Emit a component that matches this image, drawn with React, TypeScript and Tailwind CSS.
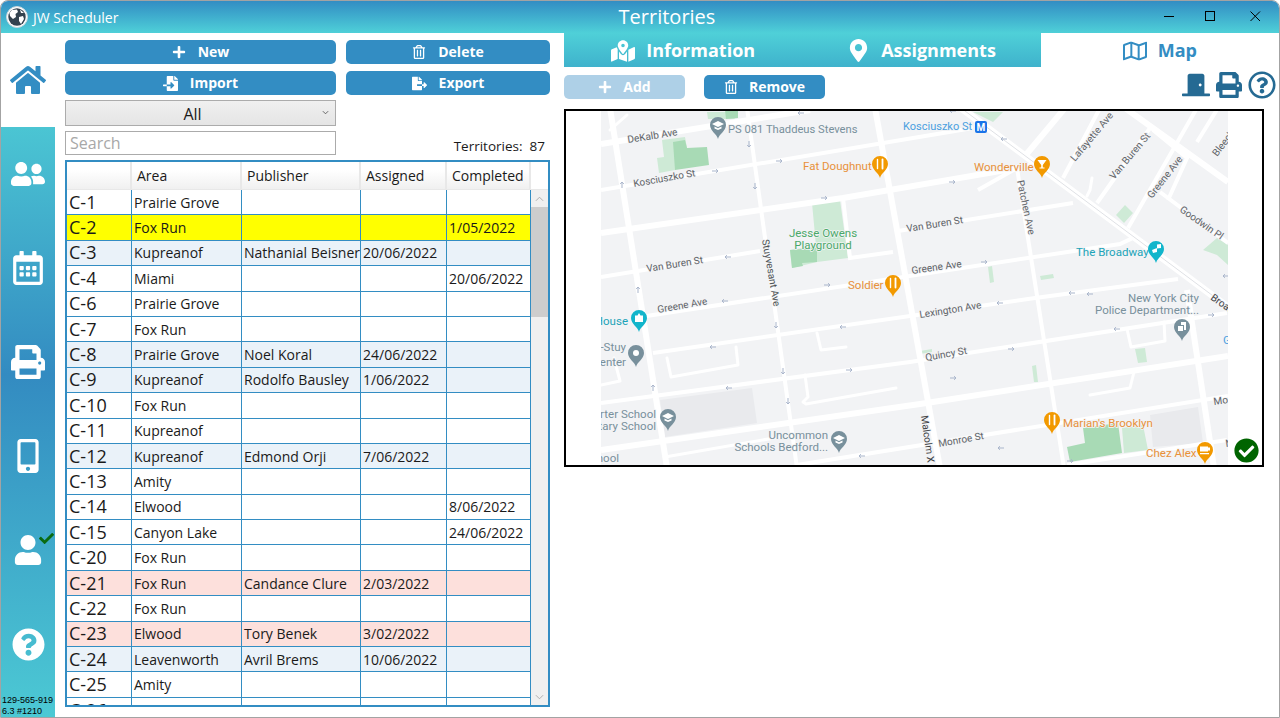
import React from "react";
import {
  FaHome, FaUserFriends, FaRegCalendarAlt, FaPrint, FaMobileAlt, FaUser, FaQuestionCircle, FaRegQuestionCircle,
  FaDoorClosed, FaPlus, FaRegTrashAlt, FaFileImport, FaFileExport, FaMapMarkedAlt, FaMapMarkerAlt, FaRegMap, FaCheckCircle, FaCheck,
} from "react-icons/fa";

type Row = [string, string, string, string, string, string?];
const rows: Row[] = [
  ["C-1", "Prairie Grove", "", "", ""],
  ["C-2", "Fox Run", "", "", "1/05/2022", "y"],
  ["C-3", "Kupreanof", "Nathanial Beisner", "20/06/2022", "", "b"],
  ["C-4", "Miami", "", "", "20/06/2022"],
  ["C-6", "Prairie Grove", "", "", ""],
  ["C-7", "Fox Run", "", "", ""],
  ["C-8", "Prairie Grove", "Noel Koral", "24/06/2022", "", "b"],
  ["C-9", "Kupreanof", "Rodolfo Bausley", "1/06/2022", "", "b"],
  ["C-10", "Fox Run", "", "", ""],
  ["C-11", "Kupreanof", "", "", ""],
  ["C-12", "Kupreanof", "Edmond Orji", "7/06/2022", "", "b"],
  ["C-13", "Amity", "", "", ""],
  ["C-14", "Elwood", "", "", "8/06/2022"],
  ["C-15", "Canyon Lake", "", "", "24/06/2022"],
  ["C-20", "Fox Run", "", "", ""],
  ["C-21", "Fox Run", "Candance Clure", "2/03/2022", "", "p"],
  ["C-22", "Fox Run", "", "", ""],
  ["C-23", "Elwood", "Tory Benek", "3/02/2022", "", "p"],
  ["C-24", "Leavenworth", "Avril Brems", "10/06/2022", "", "b"],
  ["C-25", "Amity", "", "", ""],
  ["C-26", "Kupreanof", "", "", ""],
];

function ActionButton({ icon, label, className, gap = "gap-3" }: { icon: React.ReactNode; label: string; className: string; gap?: string }) {
  return (
    <div className={`h-6 rounded-[5px] flex items-center justify-center text-white font-bold text-[14px] ${gap} ${className}`}>
      {icon}
      <span className="-mt-[2px]">{label}</span>
    </div>
  );
}

function Tab({ icon, label, active }: { icon: React.ReactNode; label: string; active?: boolean }) {
  return (
    <div className={`flex-1 h-full flex items-center justify-center gap-[11px] text-[18px] font-bold pt-[1px] ${active ? "bg-white text-[#338dc3]" : "text-white"}`}>
      {icon}
      <span>{label}</span>
    </div>
  );
}

function Pin({ x, y, color, glyph }: { x: number; y: number; color: string; glyph: string }) {
  const cy = y - 14;
  return (
    <g>
      <path d={`M${x} ${y} C${x - 1} ${y - 5} ${x - 8} ${y - 8} ${x - 8} ${cy} A8 8 0 1 1 ${x + 8} ${cy} C${x + 8} ${y - 8} ${x + 1} ${y - 5} ${x} ${y} Z`} fill={color} />
      {glyph === "fork" && (
        <g stroke="#fff" strokeWidth="1.4" strokeLinecap="round" fill="none">
          <path d={`M${x - 2.5} ${cy - 4.5} V${cy - 1} M${x - 2.5} ${cy - 1} V${cy + 4.5}`} />
          <path d={`M${x + 2.5} ${cy - 4.5} V${cy + 4.5}`} strokeWidth="1.8" />
        </g>
      )}
      {glyph === "cap" && (
        <path d={`M${x} ${cy - 4} L${x + 6} ${cy - 1} L${x} ${cy + 2} L${x - 6} ${cy - 1} Z M${x - 3.5} ${cy + 1.5} L${x} ${cy + 3.2} L${x + 3.5} ${cy + 1.5} V${cy + 3.5} L${x} ${cy + 5} L${x - 3.5} ${cy + 3.5} Z`} fill="#fff" />
      )}
      {glyph === "dot" && <circle cx={x} cy={cy} r="3" fill="#fff" />}
      {glyph === "glass" && <path d={`M${x - 4.5} ${cy - 4} H${x + 4.5} L${x + 0.8} ${cy + 1} V${cy + 3.5} H${x + 2.5} V${cy + 4.6} H${x - 2.5} V${cy + 3.5} H${x - 0.8} V${cy + 1} Z`} fill="#fff" />}
      {glyph === "music" && <path d={`M${x - 4} ${cy + 1} L${x + 1} ${cy - 1} V${cy + 3} L${x - 3} ${cy + 4} Z M${x + 1} ${cy - 4.5} L${x + 5} ${cy - 5} V${cy - 1} L${x + 1} ${cy - 0.5} Z`} fill="#fff" />}
      {glyph === "museum" && <path d={`M${x} ${cy - 5} L${x + 1.5} ${cy - 2.5} H${x + 4} V${cy + 4} H${x - 4} V${cy - 2.5} H${x - 1.5} Z`} fill="#fff" />}
      {glyph === "police" && <path d={`M${x - 4} ${cy - 1} H${x + 1} V${cy + 4} H${x - 4} Z M${x - 1} ${cy - 5} H${x + 4} V${cy + 3} H${x + 2} V${cy - 2} H${x - 1} Z`} fill="#fff" />}
      {glyph === "cup" && <path d={`M${x - 5} ${cy - 3.5} H${x + 3} V${cy - 2.5} H${x + 5} V${cy + 0.5} H${x + 3} V${cy + 1.5} H${x - 5} Z M${x - 5} ${cy + 3} H${x + 4} V${cy + 4.2} H${x - 5} Z`} fill="#fff" />}
    </g>
  );
}

function Arrow({ x, y, a }: { x: number; y: number; a: number }) {
  return (
    <g transform={`translate(${x} ${y}) rotate(${a})`} stroke="#a9b5cb" fill="none" strokeWidth="1">
      <path d="M-3 0 H3 M1 -1.8 L3 0 L1 1.8" />
    </g>
  );
}

function Label({ x, y, t, c = "#5f6368", r = 0, s = 10, a = "start" }: { x: number; y: number; t: string; c?: string; r?: number; s?: number; a?: "start" | "end" | "middle" }) {
  return (
    <text x={x} y={y} transform={r ? `rotate(${r} ${x} ${y})` : undefined} fill={c} fontSize={s} textAnchor={a} stroke="#f2f3f5" strokeWidth="1.5" paintOrder="stroke" fontFamily="Roboto, sans-serif">
      {t}
    </text>
  );
}

function MapArt() {
  const slate = "#78909c";
  const orange = "#e8913a";
  const teal = "#1ba3b8";
  const green = "#4ba96a";
  const wide: string[] = [
    "M601 144 L810 110",
    "M601 233 L843 198 L1030 166",
    "M601 450 L920 404 L1228 356",
    "M610 108 L667 468",
    "M875 108 L940 468",
    "M1025 156 L1065 108",
    "M1125 108 L1228 182",
    "M1187 290 L1214 468",
  ];
  const thin: string[] = [
    "M601 190 L973 128",
    "M601 277 L760 251",
    "M843 198 L850 258 L893 252",
    "M898 231 L1073 203",
    "M640 317 L1120 244 L1133 238 L1140 240",
    "M653 353 L1035 298 L1178 279",
    "M601 403 L910 362 L1227 313",
    "M797 465 L1228 396",
    "M1067 465 L1227 440",
    "M747 108 L797 468",
    "M1017 168 L1064 468",
    "M1100 108 L1063 178",
    "M1150 128 L1097 203",
    "M1197 108 L1128 228",
    "M1160 192 L1228 243",
    "M1153 130 L1187 158 L1168 200",
    "M1218 108 L1197 142",
    "M978 190 L1017 168",
  ];
  const service: string[] = [
    "M667 358 L671 377 L738 365 L736 347",
    "M817 333 L821 350 L846 347",
    "M805 375 L808 397 L803 402 L806 404 L896 388",
    "M601 385 L620 381 L614 358",
    "M1127 329 L1131 347 L1165 341 L1164 322",
    "M1090 395 L1130 388 L1134 372",
    "M1087 196 L1090 190 L1092 178",
    "M665 457 L780 437",
    "M610 130 L627 115",
  ];
  const arrows: [number, number, number][] = [
    [801, 113, 180], [749, 144, 90], [715, 171, 0], [779, 161, 0], [622, 185, -90], [755, 186, 90], [824, 198, 0],
    [728, 257, 180], [638, 290, -90], [827, 285, 0], [725, 301, 180], [776, 325, 90], [713, 347, 180], [843, 327, 180],
    [783, 371, 90], [729, 388, 180], [653, 388, -90], [788, 401, 90], [849, 370, 0], [862, 456, 180], [953, 378, 0],
    [984, 262, 0], [1070, 461, 0], [1001, 448, 180], [1117, 329, 180], [1011, 349, 0], [1000, 303, 180], [1211, 315, 0],
    [1072, 293, 180], [1090, 294, 180], [953, 111, 180], [952, 182, 0], [1004, 139, 180], [1118, 478, 0],
    [1226, 276, 180],
  ];
  return (
    <svg viewBox="601 111 627 354" width="627" height="354" className="block">
      <rect x="601" y="111" width="627" height="354" fill="#f2f3f5" />
      <path d="M660 400 L752 388 L757 423 L665 437 Z M1150 415 L1198 407 L1203 443 L1153 447 Z" fill="#e9eaed" />
      <g fill="#ceead6">
        <path d="M707 112 L730 112 L735 119 L708 119 Z" />
        <path d="M662 140 L685 137 L687 148 L675 170 L659 173 L657 158 L664 157 Z" />
        <path d="M812 203 L840 200 L848 258 L817 262 L792 268 L790 250 L816 246 Z" />
        <path d="M1122 428 L1143 425 L1148 450 L1124 453 Z" />
        <path d="M988 267 L992 266 L994 282 L990 283 Z M1040 276 L1053 274 L1054 278 L1041 280 Z M1116 215 L1125 205 L1133 213 L1124 223 Z M1203 250 L1217 238 L1228 245 L1228 265 L1217 255 Z M973 112 L1003 112 L993 122 Z M1032 366 L1036 365 L1038 382 L1034 382 Z M1135 349 L1145 348 L1147 362 L1138 363 Z M920 351 L932 349 L932 352 L920 354 Z" />
      </g>
      <g fill="#a8dab5">
        <path d="M725 110 L738 110 L738 118 L726 119 Z" />
        <path d="M673 142 L685 140 L687 148 L707 147 L709 165 L675 170 Z" />
        <path d="M790 250 L802 249 L817 248 L817 262 L802 263 L803 266 L792 268 Z" />
        <path d="M1083 428 L1118 423 L1122 453 L1070 462 L1067 447 L1085 443 Z" />
      </g>
      <g stroke="#fff" fill="none">
        {wide.map((d) => <path key={d} d={d} strokeWidth="6" />)}
        {thin.map((d) => <path key={d} d={d} strokeWidth="4" />)}
        {service.map((d) => <path key={d} d={d} strokeWidth="3" strokeLinejoin="round" strokeLinecap="round" />)}
        <path d="M961 108 L1240 316" strokeWidth="7" />
      </g>
      <path d="M961 108 L1240 316" stroke="#dfe1e5" strokeWidth="1" fill="none" />
      {arrows.map(([x, y, a], i) => <Arrow key={i} x={x} y={y} a={a} />)}

      <Label x={628} y={143} t="DeKalb Ave" r={-9} />
      <Label x={634} y={187} t="Kosciuszko St" r={-10} />
      <Label x={647} y={272} t="Van Buren St" r={-9} />
      <Label x={658} y={313} t="Greene Ave" r={-10} />
      <Label x={907} y={232} t="Van Buren St" r={-9} />
      <Label x={912} y={274} t="Greene Ave" r={-8} />
      <Label x={920} y={318} t="Lexington Ave" r={-9} />
      <Label x={926} y={361} t="Quincy St" r={-10} />
      <Label x={939} y={447} t="Monroe St" r={-10} />
      <Label x={1214} y={405} t="Monroe" r={-8} />
      <Label x={1226} y={447} t="Monroe" r={-8} />
      <Label x={762} y={240} t="Stuyvesant Ave" r={80} c="#4f5357" />
      <Label x={1017} y={181} t="Patchen Ave" r={78} />
      <Label x={921} y={416} t="Malcolm X Blvd" r={82} c="#3c4043" />
      <Label x={1075} y={162} t="Lafayette Ave" r={-50} />
      <Label x={1114} y={180} t="Van Buren St" r={-50} />
      <Label x={1152} y={199} t="Greene Ave" r={-52} />
      <Label x={1179} y={211} t="Goodwin Pl" r={35} />
      <Label x={1217} y={157} t="Bleecker St" r={-52} />
      <Label x={1210} y={299} t="Broadway" r={35} c="#3c4043" />

      <Label x={728} y={133} t="PS 081 Thaddeus Stevens" c={slate} s={11.2} />
      <Label x={803} y={170} t="Fat Doughnut" c={orange} s={11.5} />
      <Label x={903} y={130} t="Kosciuszko St" c="#4a9fe0" s={11} />
      <Label x={974} y={171} t="Wonderville" c={orange} s={11.5} />
      <Label x={823} y={237} t="Jesse Owens" c={green} s={11.5} a="middle" />
      <Label x={823} y={249} t="Playground" c={green} s={11.5} a="middle" />
      <Label x={848} y={289} t="Soldier" c={orange} s={11.5} />
      <Label x={1076} y={256} t="The Broadway" c={teal} s={11.5} />
      <Label x={628} y={325} t="House" c={teal} s={11.5} a="end" />
      <Label x={626} y={351} t="Bed-Stuy" c={slate} s={11.5} a="end" />
      <Label x={626} y={366} t="Center" c={slate} s={11.5} a="end" />
      <Label x={656} y={418} t="Charter School" c={slate} s={11.5} a="end" />
      <Label x={656} y={430} t="Elementary School" c={slate} s={11.5} a="end" />
      <Label x={619} y={462} t="School" c={slate} s={11.5} a="end" />
      <Label x={828} y={439} t="Uncommon" c={slate} s={11.5} a="end" />
      <Label x={828} y={451} t="Schools Bedford..." c={slate} s={11.5} a="end" />
      <Label x={1199} y={302} t="New York City" c={slate} s={11.5} a="end" />
      <Label x={1199} y={314} t="Police Department..." c={slate} s={11.5} a="end" />
      <Label x={1063} y={427} t="Marian's Brooklyn" c={orange} s={11.5} />
      <Label x={1146} y={457} t="Chez Alex" c={orange} s={11.5} />
      <Label x={1223} y={344} t="Gates" c="#4a9fe0" s={11.5} />

      <rect x="975" y="121" width="12" height="12" rx="2" fill="#1a73e8" />
      <text x="981" y="131" fill="#fff" fontSize="10" fontWeight="700" textAnchor="middle" fontFamily="Roboto, sans-serif">M</text>

      <Pin x={718} y={139} color={slate} glyph="cap" />
      <Pin x={880} y={178} color="#f29900" glyph="fork" />
      <Pin x={893} y={297} color="#f29900" glyph="fork" />
      <Pin x={1042} y={178} color="#f29900" glyph="glass" />
      <Pin x={1156} y={263} color="#12b5cb" glyph="music" />
      <Pin x={639} y={332} color="#12b5cb" glyph="museum" />
      <Pin x={636} y={367} color={slate} glyph="dot" />
      <Pin x={668} y={431} color={slate} glyph="cap" />
      <Pin x={839} y={453} color={slate} glyph="cap" />
      <Pin x={1182} y={341} color={slate} glyph="police" />
      <Pin x={1052} y={434} color="#f29900" glyph="fork" />
      <Pin x={1205} y={464} color="#f29900" glyph="cup" />
    </svg>
  );
}

function Globe() {
  return (
    <svg viewBox="0 0 22 22" width="22" height="22">
      <circle cx="11" cy="11" r="10.5" fill="#fff" stroke="#c9d6dc" strokeWidth="1" />
      <circle cx="11" cy="11" r="8.7" fill="#33424f" />
      <path d="M6 4 L11 3.5 L12 6 L9.5 8 L10 11 L7 13 L4 10 L3.5 7 Z M13 11 L17 10 L18 13 L15 18 L13 15 Z M14 3.5 L18 7 L15 7 Z" fill="#fff" />
    </svg>
  );
}

export default function App() {
  const side = "h-[94px] flex items-center justify-center text-white";
  return (
    <div className="w-[1280px] h-[718px] overflow-hidden bg-white border border-[#a3a3a3] rounded-t-lg flex flex-col text-[#1a1a1a] font-['Open_Sans',sans-serif]">
      <div className="h-8 shrink-0 flex items-center bg-gradient-to-b from-[#338dc3] to-[#4fd0d8] text-white">
        <div className="w-[199px] flex items-center gap-[5px] pl-[5px] text-[14px]">
          <Globe />
          <span>JW Scheduler</span>
        </div>
        <div className="flex-1 text-center text-[20px] leading-none">Territories</div>
        <div className="w-[145px] h-full flex items-center text-black">
          <svg viewBox="0 0 145 32" width="145" height="32">
            <path d="M30 15.5 H40" stroke="#000" fill="none" />
            <rect x="71.5" y="10.5" width="9" height="9" stroke="#000" fill="none" />
            <path d="M116.5 10.5 L126 20 M126 10.5 L116.5 20" stroke="#000" fill="none" />
          </svg>
        </div>
      </div>

      <div className="flex-1 flex min-h-0">
        <div className="w-[54px] shrink-0 flex flex-col bg-white">
          <div className="h-[94px] flex items-center justify-center text-[#338dc3]">
            <FaHome size={36} />
          </div>
          <div className="flex-1 flex flex-col bg-[linear-gradient(to_bottom,#4bc5d3_0%,#338bc1_42%,#4cc9d4_100%)]">
            <div className={side}><FaUserFriends size={34} /></div>
            <div className={side}><FaRegCalendarAlt size={34} /></div>
            <div className={side}><FaPrint size={34} /></div>
            <div className={side}><FaMobileAlt size={34} /></div>
            <div className={`${side} relative`}>
              <FaUser size={30} />
              <FaCheck size={15} className="absolute left-[38px] top-[28px] text-[#0a6b12]" />
            </div>
            <div className={side}><FaQuestionCircle size={33} /></div>
            <div className="flex-1 flex flex-col justify-end pl-[1px] text-[9px] leading-[11px] text-black font-['Liberation_Sans',sans-serif]">
              <span>129-565-919</span>
              <span>6.3 #1210</span>
            </div>
          </div>
        </div>

        <div className="w-[509px] shrink-0 flex flex-col pl-[10px] pr-[14px] pt-[7px]">
          <div className="grid grid-cols-[271px_204px] gap-x-[10px] gap-y-[7px]">
            <ActionButton icon={<FaPlus size={14} />} label="New" className="bg-[#338dc3]" />
            <ActionButton icon={<FaRegTrashAlt size={14} />} label="Delete" className="bg-[#338dc3]" />
            <ActionButton icon={<FaFileImport size={15} />} label="Import" className="bg-[#338dc3]" />
            <ActionButton icon={<FaFileExport size={15} />} label="Export" className="bg-[#338dc3]" />
          </div>
          <div className="mt-[5px] w-[271px] h-[26px] relative flex items-center justify-center border border-[#acacac] bg-gradient-to-b from-[#f0f0f0] to-[#e5e5e5] text-[16px] pr-[16px] pt-[2px]">
            All
            <svg viewBox="0 0 8 5" width="7" height="5" className="absolute right-[6px] top-[9px]">
              <path d="M1 1 L4 4 L7 1" stroke="#555" fill="none" />
            </svg>
          </div>
          <div className="mt-[5px] flex items-end h-[24px]">
            <div className="w-[271px] h-[24px] border border-[#ababab] pl-[4px] flex items-center text-[16px] text-[#a8a8a8]">Search</div>
            <div className="flex-1 text-right text-[13.5px] leading-[16px] pr-[5px] mb-[1px]">Territories:&nbsp; 87</div>
          </div>
          <div className="mt-[5px] h-[547px] border-2 border-[#338dc3] relative overflow-hidden">
            <div className="flex h-[28px] bg-gradient-to-b from-white from-30% to-[#f0f0f0] text-[14px] border-b border-[#e8e8e8]">
              {[["", "w-[65px]"], ["Area", "w-[110px]"], ["Publisher", "w-[119px]"], ["Assigned", "w-[86px]"], ["Completed", "w-[84px]"]].map(([t, w], i) => (
                <div key={i} className={`${w} h-full border-r-2 border-[#e8e8e8] pl-[5px] flex items-center`}>{t}</div>
              ))}
              <div className="flex-1 bg-white" />
            </div>
            {rows.map((r) => (
              <div key={r[0]} className={`flex h-[25.4px] w-[464px] border-b border-[#338dc3] text-[14px] ${r[5] === "y" ? "bg-[#ffff00]" : r[5] === "b" ? "bg-[#eaf2f9]" : r[5] === "p" ? "bg-[#fde0dc]" : "bg-white"}`}>
                <div className="w-[65px] border-r border-[#338dc3] pl-[2px] flex items-center text-[18px]">{r[0]}</div>
                <div className="w-[110px] border-r border-[#338dc3] pl-[2px] flex items-center">{r[1]}</div>
                <div className="w-[119px] border-r border-[#338dc3] pl-[2px] flex items-center whitespace-nowrap overflow-hidden">{r[2]}</div>
                <div className="w-[86px] border-r border-[#338dc3] pl-[2px] flex items-center">{r[3]}</div>
                <div className="w-[84px] border-r border-[#338dc3] pl-[2px] flex items-center">{r[4]}</div>
              </div>
            ))}
            <div className="absolute right-0 top-[28px] bottom-0 w-[17px] bg-[#f0f0f0] flex flex-col items-center">
              <div className="h-[17px] flex items-center">
                <svg viewBox="0 0 10 6" width="9" height="6"><path d="M1 5 L5 1 L9 5" stroke="#a8a8a8" fill="none" /></svg>
              </div>
              <div className="h-[110px] w-full bg-[#cdcdcd]" />
              <div className="flex-1" />
              <div className="h-[17px] flex items-center">
                <svg viewBox="0 0 10 6" width="9" height="6"><path d="M1 1 L5 5 L9 1" stroke="#a8a8a8" fill="none" /></svg>
              </div>
            </div>
          </div>
        </div>

        <div className="flex-1 flex flex-col min-w-0">
          <div className="h-[34px] flex bg-gradient-to-b from-[#4fd0d8] to-[#3fb2cc]">
            <Tab icon={<FaMapMarkedAlt size={24} />} label="Information" />
            <Tab icon={<FaMapMarkerAlt size={23} />} label="Assignments" />
            <Tab icon={<FaRegMap size={24} />} label="Map" active />
          </div>
          <div className="h-[42px] flex items-start">
            <div className="flex gap-[19px] pt-[8px]">
              <ActionButton icon={<FaPlus size={14} />} label="Add" className="w-[121px] bg-[#aed0e7]" gap="gap-[11px]" />
              <ActionButton icon={<FaRegTrashAlt size={14} />} label="Remove" className="w-[121px] bg-[#338dc3]" gap="gap-[11px]" />
            </div>
            <div className="flex-1" />
            <div className="flex items-center gap-[6px] pr-[3px] pt-[4px] text-[#256a93]">
              <FaDoorClosed size={28} />
              <FaPrint size={26} />
              <FaRegQuestionCircle size={28} />
            </div>
          </div>
          <div className="relative w-[700px] h-[358px] border-2 border-black flex justify-center">
            <MapArt />
            <FaCheckCircle size={25} className="absolute left-[668px] top-[327px] text-[#006400]" />
          </div>
        </div>
      </div>
    </div>
  );
}
